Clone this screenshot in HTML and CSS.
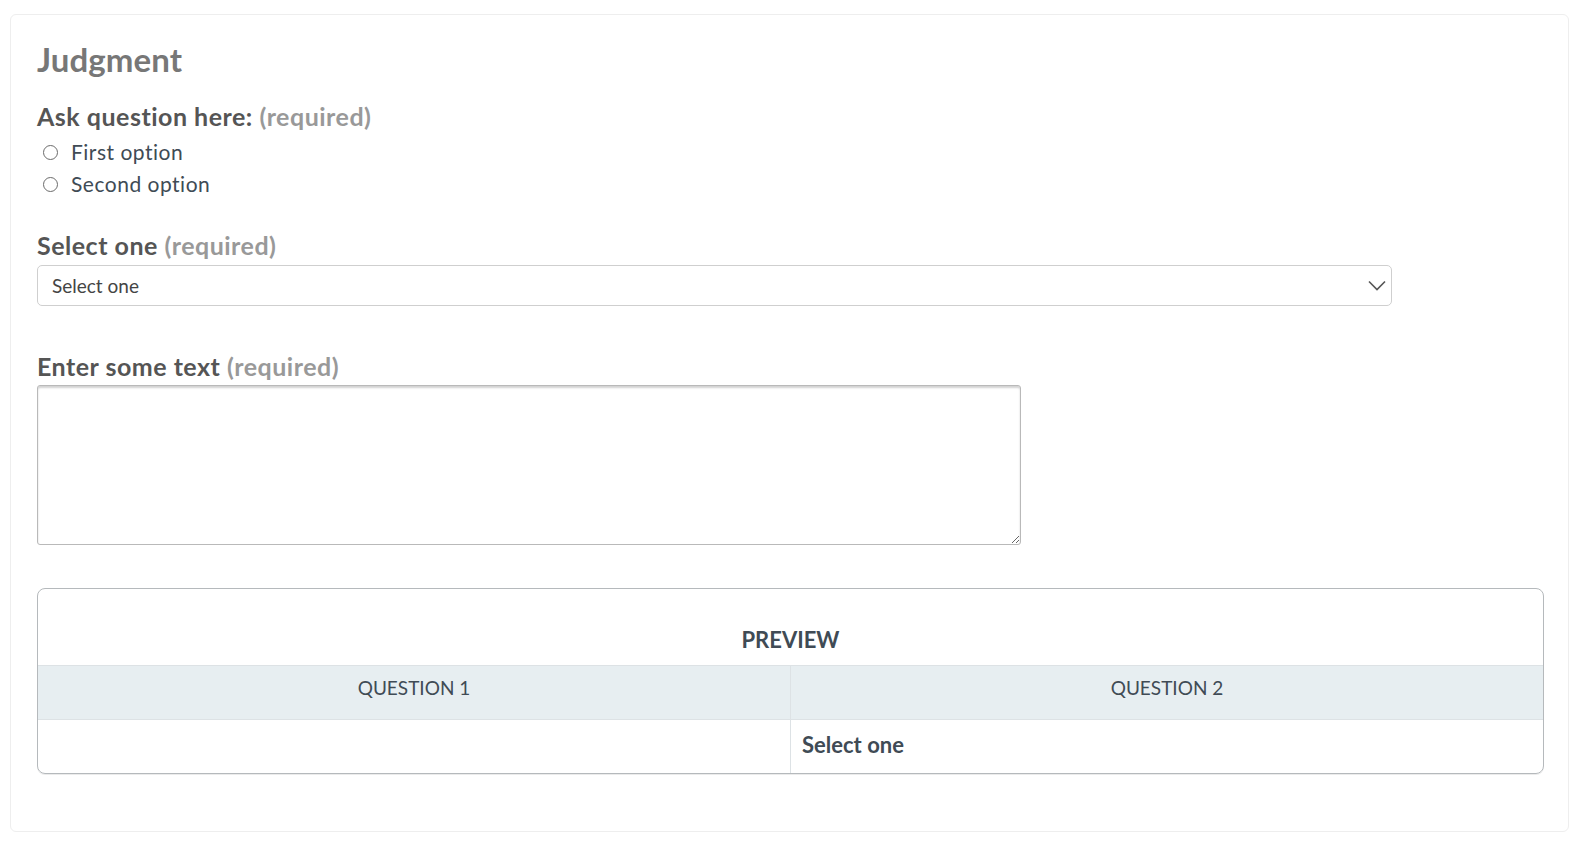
FILE: index.html
```html
<!DOCTYPE html>
<html lang="en">

<head>
    <meta charset="UTF-8">
    <meta name="viewport" content="width=device-width, initial-scale=1.0">
    <title>Judgment</title>
    <link rel="stylesheet" href="styles.css">
</head>

<body>
    <div class="page">
        <div class="card">
            <h2 class="card-title">Judgment</h2>

            <div class="field">
                <div class="field-label">Ask question here: <span class="required">(required)</span></div>
                <label class="option"><input type="radio" name="q1" value="1"> First option</label>
                <label class="option"><input type="radio" name="q1" value="2"> Second option</label>
            </div>

            <div class="field field-select">
                <div class="field-label">Select one <span class="required">(required)</span></div>
                <div class="select-wrap">
                    <select class="select">
                        <option>Select one</option>
                    </select>
                    <svg class="chevron" width="18" height="11" viewBox="0 0 18 11">
                        <path d="M1 1.5 L9 9.5 L17 1.5" fill="none" stroke="#555" stroke-width="1.6" />
                    </svg>
                </div>
            </div>

            <div class="field field-text">
                <div class="field-label">Enter some text <span class="required">(required)</span></div>
                <textarea class="textarea"></textarea>
            </div>

            <div class="preview">
                <div class="preview-title">PREVIEW</div>
                <table class="preview-table">
                    <thead>
                        <tr>
                            <th>QUESTION 1</th>
                            <th>QUESTION 2</th>
                        </tr>
                    </thead>
                    <tbody>
                        <tr>
                            <td></td>
                            <td class="answer">Select one</td>
                        </tr>
                    </tbody>
                </table>
            </div>
        </div>
    </div>
</body>

</html>
```

FILE: styles.css
```css
* {
    box-sizing: border-box;
}

body {
    margin: 0;
    background: #fff;
    font-family: Lato, "Open Sans", sans-serif;
    color: #404b55;
}

.page {
    padding: 14px 13px 13px 10px;
}

.card {
    border: 1px solid #eeeeee;
    border-radius: 6px;
    padding: 24px 26px 57px 26px;
}

.card-title {
    margin: 0;
    font-size: 33px;
    line-height: 40px;
    font-weight: 700;
    letter-spacing: 0.1px;
    color: #777;
}

.field-label {
    font-size: 25px;
    line-height: 30px;
    font-weight: 700;
    letter-spacing: 0.5px;
    color: #555;
}

.required {
    color: #999;
}

.field {
    margin-top: 22px;
}

.field .field-label {
    margin-bottom: 5px;
}

.option {
    display: flex;
    align-items: center;
    font-size: 21px;
    line-height: 32px;
    letter-spacing: 0.5px;
    color: #404b55;
}

.option input {
    appearance: none;
    -webkit-appearance: none;
    width: 15px;
    height: 15px;
    margin: 0 13px 0 6px;
    border: 1px solid #6b6b6b;
    border-radius: 50%;
    background: #fff;
}

.field-select {
    margin-top: 30px;
}

.select-wrap {
    position: relative;
    width: 90%;
}

.select {
    appearance: none;
    -webkit-appearance: none;
    display: block;
    width: 100%;
    height: 41px;
    padding: 0 40px 0 14px;
    border: 1px solid #cfcfcf;
    border-radius: 5px;
    background: #fff;
    font-family: Lato, sans-serif;
    font-size: 19px;
    color: #444;
}

.chevron {
    position: absolute;
    right: 6px;
    top: 15px;
}

.field-text {
    margin-top: 45px;
}

.field-text .field-label {
    margin-bottom: 4px;
}

.textarea {
    display: block;
    width: 984px;
    height: 160px;
    border: 1px solid #b9b9b9;
    border-radius: 3px;
    box-shadow: inset 0 2px 2px rgba(0, 0, 0, 0.18);
    font-family: Lato, sans-serif;
    font-size: 18px;
    resize: both;
}

.preview {
    margin-top: 43px;
    margin-right: -2px;
    border: 1px solid #b5b9bc;
    border-radius: 8px;
    overflow: hidden;
    box-shadow: 0 1px 0 rgba(0, 0, 0, 0.08);
}

.preview-title {
    padding: 36px 0 10px;
    text-align: center;
    font-size: 22px;
    line-height: 30px;
    font-weight: 700;
    color: #404b55;
}

.preview-table {
    width: 100%;
    border-collapse: collapse;
    table-layout: fixed;
}

.preview-table th {
    background: #e7eef1;
    border-top: 1px solid #dde2e5;
    border-bottom: 1px solid #dde2e5;
    padding: 7px 10px 16px;
    font-size: 19px;
    line-height: 30px;
    font-weight: 400;
    color: #404b55;
}

.preview-table td {
    padding: 10px 11px 13px;
    font-size: 22px;
    line-height: 30px;
    height: 53px;
}

.preview-table th + th,
.preview-table td + td {
    border-left: 1px solid #dde2e5;
}

.answer {
    font-weight: 700;
    color: #404b55;
}
```
